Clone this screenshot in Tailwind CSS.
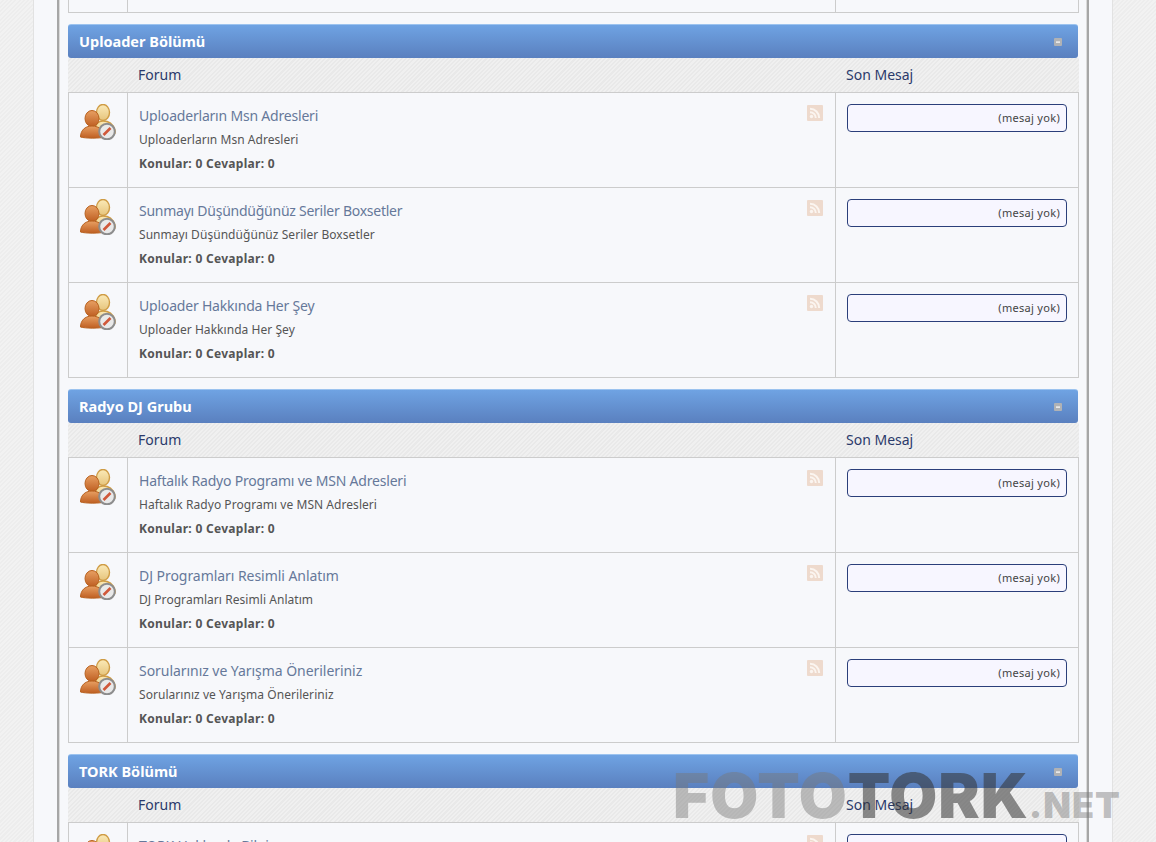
<!DOCTYPE html>
<html lang="tr">
<head>
<meta charset="utf-8">
<title>Forum</title>
<script src="https://cdn.jsdelivr.net/npm/@tailwindcss/browser@4"></script>
</head>
<body class="bg-[#f0f0f0] font-['Noto_Sans',sans-serif]">
<svg width="0" height="0" class="absolute">
  <defs>
    <linearGradient id="u1" x1="0" y1="0" x2="0" y2="1"><stop offset="0" stop-color="#fbeab8"/><stop offset="1" stop-color="#e6c47c"/></linearGradient>
    <linearGradient id="u2" x1="0" y1="0" x2="0" y2="1"><stop offset="0" stop-color="#e8a063"/><stop offset="1" stop-color="#bf5f22"/></linearGradient>
    <symbol id="users" viewBox="0 0 36 36">
      <ellipse cx="23" cy="8.500" rx="6.500" ry="8" fill="url(#u1)" stroke="#cf9c45" stroke-width="1.400"/>
      <path d="M15 26c0-5 3-9 8-9s10 3 12 9v3H15z" fill="url(#u1)" stroke="#cf9c45" stroke-width="1.400"/>
      <ellipse cx="12" cy="14.500" rx="7" ry="8" fill="url(#u2)" stroke="#b8611f"/>
      <path d="M.5 33c0-6 4-11 11.500-11s12 5 13 11c-5 1.500-20 1.500-24.500 0z" fill="url(#u2)" stroke="#b8611f"/>
      <circle cx="27" cy="27.500" r="7.800" fill="#e9e9e9" stroke="#8d8d8d" stroke-width="2"/>
      <path d="M23.500 31l7-7" stroke="#d0583a" stroke-width="2.600"/>
    </symbol>
    <symbol id="rss" viewBox="0 0 16 16">
      <rect width="16" height="16" rx="1" fill="#eedacd"/>
      <circle cx="4.500" cy="11.500" r="1.700" fill="#fbf5f0"/>
      <path d="M3 7.200a5.800 5.800 0 0 1 5.800 5.800M3 3.800a9.200 9.200 0 0 1 9.200 9.200" fill="none" stroke="#fbf5f0" stroke-width="2"/>
    </symbol>
    <symbol id="minus" viewBox="0 0 8 8">
      <rect width="8" height="8" rx="1" fill="#b0b2b5"/>
      <rect x="2" y="3.500" width="4" height="1.200" fill="#fff"/>
    </symbol>
  </defs>
</svg>

<div class="relative h-[842px] overflow-hidden bg-[repeating-linear-gradient(135deg,#f2f2f2_0,#f2f2f2_1.500px,#ededed_1.500px,#ededed_3px)]">
  <div class="ml-[33px] h-full w-[1080px] border-x border-[#e2e2e2] bg-[#f7f8fb] px-[23px]">
    <div class="h-full overflow-hidden border-x-2 border-x-[#a6a6a6] pr-[8px] pl-[9px] text-[#555] shadow-[inset_1px_0_0_#dadada,inset_-1px_0_0_#dadada]">
      <div class="-mt-[80px]">

        <!-- previous table end -->
        <div class="flex h-[93px] border-x border-b border-[#cccccc]">
          <div class="w-[59px] border-r border-[#cccccc]"></div>
          <div class="w-[708px] border-r border-[#cccccc]"></div>
          <div class="flex-1"></div>
        </div>

        <!-- Uploader Bölümü -->
        <section class="mt-[11px]">
          <h2 class="mr-[1px] flex h-[34px] items-center justify-between rounded-[3px] border-t border-[#9cc3ef] bg-linear-to-b from-[#6fa3e3] to-[#5a80bf] pr-[16px] pl-[11px] text-[14.500px] leading-none font-bold text-white">
            <span>Uploader Bölümü</span>
            <svg class="h-2 w-2"><use href="#minus"/></svg>
          </h2>
          <div class="flex h-[35px] items-center border-b border-[#cccccc] bg-[repeating-linear-gradient(135deg,#f0f0f0_0,#f0f0f0_1.500px,#e9e9e9_1.500px,#e9e9e9_3px)] pb-[2px] text-[14px] text-[#2b3a6b]">
            <div class="w-[70px]"></div>
            <div class="w-[708px]">Forum</div>
            <div>Son Mesaj</div>
          </div>
          <div class="border-x border-[#cccccc]">
            <div class="flex h-[95px] border-b border-[#cccccc]">
              <div class="w-[59px] border-r border-[#cccccc] pt-[11px] pl-[11px]"><svg class="h-9 w-9"><use href="#users"/></svg></div>
              <div class="relative w-[708px] border-r border-[#cccccc] pt-[13px] pl-[11px]">
                <a class="block text-[14px] leading-[20px] tracking-[-0.2px] text-[#66789a]">Uploaderların Msn Adresleri</a>
                <p class="mt-[4px] text-[12px] leading-[20px] tracking-[0.05px]">Uploaderların Msn Adresleri</p>
                <p class="mt-[4px] text-[12px] leading-[20px] font-bold tracking-[0.3px]">Konular: 0 Cevaplar: 0</p>
                <svg class="absolute top-[12px] right-[12px] h-4 w-4"><use href="#rss"/></svg>
              </div>
              <div class="flex-1 pt-[11px] pr-[11px] pl-[11px]"><div class="flex h-[28px] items-center justify-end rounded-[4px] border border-[#2b3f7a] bg-[#f7f6ff] pr-[6px] text-[11px] tracking-[0.3px] text-[#444]">(mesaj yok)</div></div>
            </div>
            <div class="flex h-[95px] border-b border-[#cccccc]">
              <div class="w-[59px] border-r border-[#cccccc] pt-[11px] pl-[11px]"><svg class="h-9 w-9"><use href="#users"/></svg></div>
              <div class="relative w-[708px] border-r border-[#cccccc] pt-[13px] pl-[11px]">
                <a class="block text-[14px] leading-[20px] tracking-[-0.25px] text-[#66789a]">Sunmayı Düşündüğünüz Seriler Boxsetler</a>
                <p class="mt-[4px] text-[12px] leading-[20px] tracking-[0.05px]">Sunmayı Düşündüğünüz Seriler Boxsetler</p>
                <p class="mt-[4px] text-[12px] leading-[20px] font-bold tracking-[0.3px]">Konular: 0 Cevaplar: 0</p>
                <svg class="absolute top-[12px] right-[12px] h-4 w-4"><use href="#rss"/></svg>
              </div>
              <div class="flex-1 pt-[11px] pr-[11px] pl-[11px]"><div class="flex h-[28px] items-center justify-end rounded-[4px] border border-[#2b3f7a] bg-[#f7f6ff] pr-[6px] text-[11px] tracking-[0.3px] text-[#444]">(mesaj yok)</div></div>
            </div>
            <div class="flex h-[95px] border-b border-[#cccccc]">
              <div class="w-[59px] border-r border-[#cccccc] pt-[11px] pl-[11px]"><svg class="h-9 w-9"><use href="#users"/></svg></div>
              <div class="relative w-[708px] border-r border-[#cccccc] pt-[13px] pl-[11px]">
                <a class="block text-[14px] leading-[20px] tracking-[-0.2px] text-[#66789a]">Uploader Hakkında Her Şey</a>
                <p class="mt-[4px] text-[12px] leading-[20px] tracking-[0.05px]">Uploader Hakkında Her Şey</p>
                <p class="mt-[4px] text-[12px] leading-[20px] font-bold tracking-[0.3px]">Konular: 0 Cevaplar: 0</p>
                <svg class="absolute top-[12px] right-[12px] h-4 w-4"><use href="#rss"/></svg>
              </div>
              <div class="flex-1 pt-[11px] pr-[11px] pl-[11px]"><div class="flex h-[28px] items-center justify-end rounded-[4px] border border-[#2b3f7a] bg-[#f7f6ff] pr-[6px] text-[11px] tracking-[0.3px] text-[#444]">(mesaj yok)</div></div>
            </div>
          </div>
        </section>

        <!-- Radyo DJ Grubu -->
        <section class="mt-[11px]">
          <h2 class="mr-[1px] flex h-[34px] items-center justify-between rounded-[3px] border-t border-[#9cc3ef] bg-linear-to-b from-[#6fa3e3] to-[#5a80bf] pr-[16px] pl-[11px] text-[14.500px] leading-none font-bold text-white">
            <span>Radyo DJ Grubu</span>
            <svg class="h-2 w-2"><use href="#minus"/></svg>
          </h2>
          <div class="flex h-[35px] items-center border-b border-[#cccccc] bg-[repeating-linear-gradient(135deg,#f0f0f0_0,#f0f0f0_1.500px,#e9e9e9_1.500px,#e9e9e9_3px)] pb-[2px] text-[14px] text-[#2b3a6b]">
            <div class="w-[70px]"></div>
            <div class="w-[708px]">Forum</div>
            <div>Son Mesaj</div>
          </div>
          <div class="border-x border-[#cccccc]">
            <div class="flex h-[95px] border-b border-[#cccccc]">
              <div class="w-[59px] border-r border-[#cccccc] pt-[11px] pl-[11px]"><svg class="h-9 w-9"><use href="#users"/></svg></div>
              <div class="relative w-[708px] border-r border-[#cccccc] pt-[13px] pl-[11px]">
                <a class="block text-[14px] leading-[20px] tracking-[-0.2px] text-[#66789a]">Haftalık Radyo Programı ve MSN Adresleri</a>
                <p class="mt-[4px] text-[12px] leading-[20px] tracking-[0.05px]">Haftalık Radyo Programı ve MSN Adresleri</p>
                <p class="mt-[4px] text-[12px] leading-[20px] font-bold tracking-[0.3px]">Konular: 0 Cevaplar: 0</p>
                <svg class="absolute top-[12px] right-[12px] h-4 w-4"><use href="#rss"/></svg>
              </div>
              <div class="flex-1 pt-[11px] pr-[11px] pl-[11px]"><div class="flex h-[28px] items-center justify-end rounded-[4px] border border-[#2b3f7a] bg-[#f7f6ff] pr-[6px] text-[11px] tracking-[0.3px] text-[#444]">(mesaj yok)</div></div>
            </div>
            <div class="flex h-[95px] border-b border-[#cccccc]">
              <div class="w-[59px] border-r border-[#cccccc] pt-[11px] pl-[11px]"><svg class="h-9 w-9"><use href="#users"/></svg></div>
              <div class="relative w-[708px] border-r border-[#cccccc] pt-[13px] pl-[11px]">
                <a class="block text-[14px] leading-[20px] tracking-[-0.05px] text-[#66789a]">DJ Programları Resimli Anlatım</a>
                <p class="mt-[4px] text-[12px] leading-[20px] tracking-[0.05px]">DJ Programları Resimli Anlatım</p>
                <p class="mt-[4px] text-[12px] leading-[20px] font-bold tracking-[0.3px]">Konular: 0 Cevaplar: 0</p>
                <svg class="absolute top-[12px] right-[12px] h-4 w-4"><use href="#rss"/></svg>
              </div>
              <div class="flex-1 pt-[11px] pr-[11px] pl-[11px]"><div class="flex h-[28px] items-center justify-end rounded-[4px] border border-[#2b3f7a] bg-[#f7f6ff] pr-[6px] text-[11px] tracking-[0.3px] text-[#444]">(mesaj yok)</div></div>
            </div>
            <div class="flex h-[95px] border-b border-[#cccccc]">
              <div class="w-[59px] border-r border-[#cccccc] pt-[11px] pl-[11px]"><svg class="h-9 w-9"><use href="#users"/></svg></div>
              <div class="relative w-[708px] border-r border-[#cccccc] pt-[13px] pl-[11px]">
                <a class="block text-[14px] leading-[20px] tracking-[-0.05px] text-[#66789a]">Sorularınız ve Yarışma Önerileriniz</a>
                <p class="mt-[4px] text-[12px] leading-[20px] tracking-[0.05px]">Sorularınız ve Yarışma Önerileriniz</p>
                <p class="mt-[4px] text-[12px] leading-[20px] font-bold tracking-[0.3px]">Konular: 0 Cevaplar: 0</p>
                <svg class="absolute top-[12px] right-[12px] h-4 w-4"><use href="#rss"/></svg>
              </div>
              <div class="flex-1 pt-[11px] pr-[11px] pl-[11px]"><div class="flex h-[28px] items-center justify-end rounded-[4px] border border-[#2b3f7a] bg-[#f7f6ff] pr-[6px] text-[11px] tracking-[0.3px] text-[#444]">(mesaj yok)</div></div>
            </div>
          </div>
        </section>

        <!-- TORK Bölümü -->
        <section class="mt-[11px]">
          <h2 class="mr-[1px] flex h-[34px] items-center justify-between rounded-[3px] border-t border-[#9cc3ef] bg-linear-to-b from-[#6fa3e3] to-[#5a80bf] pr-[16px] pl-[11px] text-[14.500px] leading-none font-bold text-white">
            <span>TORK Bölümü</span>
            <svg class="h-2 w-2"><use href="#minus"/></svg>
          </h2>
          <div class="flex h-[35px] items-center border-b border-[#cccccc] bg-[repeating-linear-gradient(135deg,#f0f0f0_0,#f0f0f0_1.500px,#e9e9e9_1.500px,#e9e9e9_3px)] pb-[2px] text-[14px] text-[#2b3a6b]">
            <div class="w-[70px]"></div>
            <div class="w-[708px]">Forum</div>
            <div>Son Mesaj</div>
          </div>
          <div class="border-x border-[#cccccc]">
            <div class="flex h-[95px] border-b border-[#cccccc]">
              <div class="w-[59px] border-r border-[#cccccc] pt-[11px] pl-[11px]"><svg class="h-9 w-9"><use href="#users"/></svg></div>
              <div class="relative w-[708px] border-r border-[#cccccc] pt-[13px] pl-[11px]">
                <a class="block text-[14px] leading-[20px] tracking-[-0.2px] text-[#66789a]">TORK Hakkında Bilgi</a>
                <svg class="absolute top-[12px] right-[12px] h-4 w-4"><use href="#rss"/></svg>
              </div>
              <div class="flex-1 pt-[11px] pr-[11px] pl-[11px]"><div class="h-[28px] rounded-[4px] border border-[#2b3f7a] bg-[#f7f6ff]"></div></div>
            </div>
          </div>
        </section>
      </div>
    </div>
  </div>

  <!-- watermark -->
  <div class="pointer-events-none absolute top-[765px] left-[673px] flex items-baseline font-['Inter',sans-serif] text-[62px] leading-none font-black tracking-[1px]">
    <span class="text-[#777]/45">FOTO</span><span class="text-[#333]/55">TORK</span><span class="text-[36px] tracking-[1px] text-[#777]/45">.NET</span>
  </div>
</div>
</body>
</html>
